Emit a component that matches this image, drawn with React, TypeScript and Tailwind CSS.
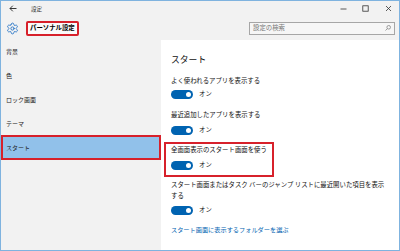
import React from "react";
import { Settings } from "lucide-react";

function Toggle() {
  return (
    <div className="flex items-center h-[10px]">
      <div className="w-[22px] h-[9px] rounded-full bg-[#0063b1] flex items-center justify-end pr-[2px]">
        <div className="w-[5px] h-[5px] rounded-full bg-white" />
      </div>
      <span className="ml-[6px] text-[6.4px] leading-[10px] text-[#111]">オン</span>
    </div>
  );
}

export default function App() {
  const items = ["背景", "色", "ロック画面", "テーマ"];
  return (
    <div className="w-[400px] h-[251px] flex flex-col border border-[#7fb3df] bg-[#f2f2f2] overflow-hidden font-['Noto_Sans_CJK_JP',sans-serif] text-[#111]">
      {/* title bar */}
      <div className="h-[15px] flex items-center shrink-0">
        <svg className="ml-[8px]" width="8" height="7" viewBox="0 0 8 7">
          <path d="M7.5 3.5H1M3.8 0.7L1 3.5l2.8 2.8" fill="none" stroke="#222" strokeWidth="0.9" />
        </svg>
        <span className="ml-[14px] text-[5.5px] leading-[8px] text-[#333]">設定</span>
        <div className="ml-auto flex items-center mr-[7px]">
          <svg width="7" height="7" viewBox="0 0 7 7">
            <path d="M0.5 4H6.5" stroke="#333" strokeWidth="0.8" />
          </svg>
          <svg className="ml-[15px]" width="7" height="7" viewBox="0 0 7 7">
            <rect x="0.8" y="0.8" width="5.4" height="5.4" fill="none" stroke="#333" strokeWidth="0.8" />
          </svg>
          <svg className="ml-[16px]" width="7" height="7" viewBox="0 0 7 7">
            <path d="M1 1L6 6M6 1L1 6" stroke="#333" strokeWidth="0.8" />
          </svg>
        </div>
      </div>
      {/* header row */}
      <div className="h-[24px] flex items-center shrink-0">
        <Settings className="ml-[5px]" size={13} color="#1f6fc4" strokeWidth={1.6} />
        <div className="ml-[7px] h-[15px] px-[2px] border-2 border-[#d7212b] rounded-[2px] bg-[#fafafa] flex items-center">
          <span className="text-[6.4px] leading-[10px] font-bold text-black">パーソナル設定</span>
        </div>
        <div className="ml-auto mr-[4px] w-[146px] h-[13px] border border-[#a6a6a6] bg-[#f6f6f6] flex items-center px-[3px]">
          <span className="text-[6.4px] leading-[10px] text-[#777]">設定の検索</span>
          <svg className="ml-auto" width="6" height="6" viewBox="0 0 6 6">
            <circle cx="3.7" cy="2.3" r="1.8" fill="none" stroke="#777" strokeWidth="0.7" />
            <path d="M2.4 3.6L0.5 5.5" stroke="#777" strokeWidth="0.7" />
          </svg>
        </div>
      </div>
      {/* body */}
      <div className="flex-1 flex min-h-0">
        <div className="w-[160px] bg-[#f2f2f2] flex flex-col">
          {items.map((t) => (
            <div key={t} className="h-[24px] flex items-center pl-[5px] text-[6px] leading-[10px] text-[#222]">
              {t}
            </div>
          ))}
          <div className="h-[25px] -mt-px flex items-center pl-[3px] bg-[#91c1ea] border-2 border-[#d7212b] text-[6px] leading-[10px] text-[#222]">
            スタート
          </div>
        </div>
        <div className="flex-1 bg-white pl-[10px] flex flex-col">
          <div className="mt-[13px] text-[8.8px] leading-[14px] text-[#111]">スタート</div>
          <div className="mt-[9px] text-[6.4px] leading-[10px]">よく使われるアプリを表示する</div>
          <div className="mt-[3px]"><Toggle /></div>
          <div className="mt-[11px] text-[6.4px] leading-[10px]">最近追加したアプリを表示する</div>
          <div className="mt-[5px]"><Toggle /></div>
          <div className="mt-[7px] -ml-[7px] w-[110px] border-2 border-[#d7212b] pl-[5px] pt-[1px] pb-[5px]">
            <div className="text-[6.4px] leading-[10px]">全画面表示のスタート画面を使う</div>
            <div className="mt-[5px]"><Toggle /></div>
          </div>
          <div className="mt-[2px] text-[6.4px] leading-[11px]">
            スタート画面またはタスク バーのジャンプ リストに最近開いた項目を表示<br />する
          </div>
          <div className="mt-[4px]"><Toggle /></div>
          <div className="mt-[10px] text-[6.2px] leading-[10px] text-[#0063b1]">スタート画面に表示するフォルダーを選ぶ</div>
        </div>
      </div>
    </div>
  );
}
